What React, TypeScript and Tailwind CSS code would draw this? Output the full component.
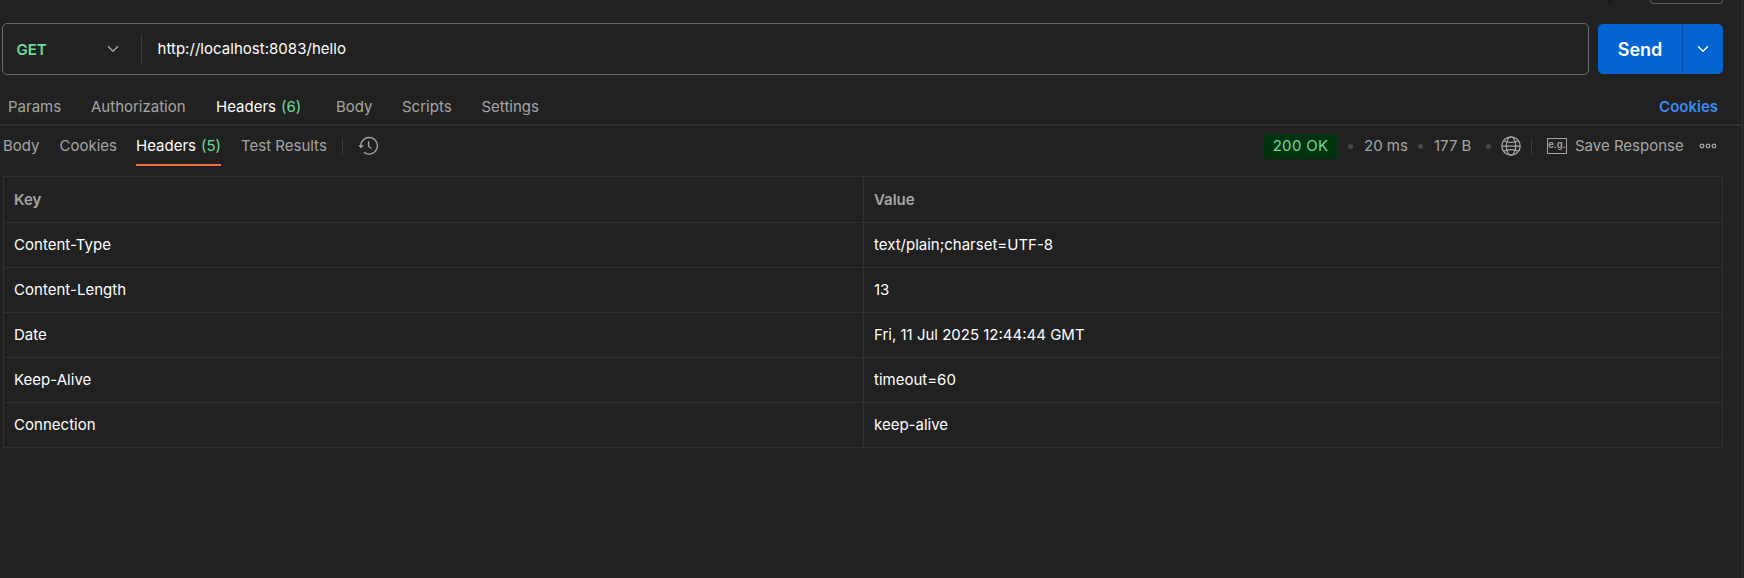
import type { ReactNode } from 'react';

const requestTabs = [
  { label: 'Params', width: 'w-[83px]' },
  { label: 'Authorization', width: 'w-[125px]' },
  { label: 'Headers', count: 6, width: 'w-[120px]' },
  { label: 'Body', width: 'w-[66px]' },
  { label: 'Scripts', width: 'w-[79.5px]' },
  { label: 'Settings', width: 'w-[80px]' },
];

const responseTabs = [
  { label: 'Body', width: 'w-[56.5px]' },
  { label: 'Cookies', width: 'w-[76.5px]' },
  { label: 'Headers', count: 5, width: 'w-[105px]' },
  { label: 'Test Results', width: 'w-[101px]' },
];

const headers = [
  ['Content-Type', 'text/plain;charset=UTF-8'],
  ['Content-Length', '13'],
  ['Date', 'Fri, 11 Jul 2025 12:44:44 GMT'],
  ['Keep-Alive', 'timeout=60'],
  ['Connection', 'keep-alive'],
];

function Chevron({ className }: { className: string }) {
  return (
    <svg width="12" height="8" viewBox="0 0 12 8" fill="none" stroke="currentColor" strokeWidth="1.4" className={className}>
      <path d="M1 1.2 6 6.2l5-5" />
    </svg>
  );
}

function HistoryIcon() {
  return (
    <svg width="20" height="20" viewBox="0 0 20 20" fill="none" stroke="currentColor" strokeWidth="1.3">
      <path d="M2.8 10.2a8.3 8.3 0 1 1 3.1 6.1" />
      <path d="M.7 9.6h4.6L3 12z" fill="currentColor" strokeWidth=".6" />
      <path d="M10.6 5.2v5.3l2.9 2" />
    </svg>
  );
}

function GlobeIcon() {
  return (
    <svg width="20" height="20" viewBox="0 0 20 20" fill="none" stroke="currentColor" strokeWidth="1.25">
      <circle cx="10" cy="10" r="9.2" />
      <ellipse cx="10" cy="10" rx="4.7" ry="9.2" />
      <path d="M2.7 4.8c3.6 2.2 11 2.2 14.6 0M2.7 15.2c3.6-2.2 11-2.2 14.6 0M.8 10h18.4" />
    </svg>
  );
}

function ExampleIcon() {
  return (
    <span className="flex h-4 w-5 items-center justify-center border border-[#a6a6a6] pb-[3px] text-[9.5px] leading-none font-semibold">
      e.g.
    </span>
  );
}

function MoreIcon() {
  return (
    <svg width="18" height="6" viewBox="0 0 18 6" fill="none" stroke="currentColor" strokeWidth="1.3">
      <circle cx="3" cy="3" r="1.8" />
      <circle cx="9" cy="3" r="1.8" />
      <circle cx="15" cy="3" r="1.8" />
    </svg>
  );
}

function Dot({ className }: { className: string }) {
  return <span className={`size-[5px] shrink-0 rounded-full bg-[#474747] ${className}`} />;
}

function TabText({ label, count }: { label: string; count?: number }) {
  return (
    <span className={count ? 'whitespace-nowrap text-white' : 'whitespace-nowrap'}>
      {label}
      {count && <span className="ml-[5px] text-[#6bdd9a]">({count})</span>}
    </span>
  );
}

function Cell({ children }: { children: ReactNode }) {
  return <div className="flex items-center border-r border-b border-[#303030] pl-[10px]">{children}</div>;
}

export default function App() {
  return (
    <div className="flex h-[578px] w-[1744px] overflow-hidden bg-[#212121] font-['Inter',sans-serif] text-[15px] leading-5 text-[#a6a6a6]">
      <div className="flex w-[1742px] shrink-0 flex-col">
        <div className="flex h-[23px] items-start justify-end pr-[19px]">
          <span className="mr-10 h-1 w-px bg-[#111111]" />
          <span className="h-1 w-[73px] rounded-b-[5px] border border-t-0 border-[#5c5c5c]" />
        </div>

        <div className="flex h-[52px] items-center pl-[2px]">
          <div className="flex h-[52px] w-[1587px] items-center rounded-[5px] border border-[#6b6b6b]">
            <div className="flex w-[138px] items-center justify-between pl-[13.5px]">
              <span className="pt-px font-semibold text-[#6bdd9a]">GET</span>
              <Chevron className="mr-[22px]" />
            </div>
            <span className="h-[30px] w-px bg-[#3b3b3b]" />
            <span className="ml-[15.5px] pb-px tracking-[0.03px] text-white">http://localhost:8083/hello</span>
          </div>
          <div className="ml-[9px] flex h-[50px] w-[125px] overflow-hidden rounded-[5px] bg-[#0265d2] text-white">
            <div className="flex w-[85px] items-center justify-center border-r border-[#0c4b94] pt-px text-[18px] font-semibold">Send</div>
            <div className="flex flex-1 items-center justify-center">
              <Chevron className="" />
            </div>
          </div>
        </div>

        <div className="flex h-[51px] items-center border-b-2 border-[#303030] pt-[14px] pr-6 pl-2">
          {requestTabs.map((tab) => (
            <div key={tab.label} className={`${tab.width} shrink-0`}>
              <TabText label={tab.label} count={tab.count} />
            </div>
          ))}
          <span className="ml-auto font-semibold text-[#3b8cf5]">Cookies</span>
        </div>

        <div className="flex h-[50px] pl-[3px]">
          {responseTabs.map((tab) => (
            <div key={tab.label} className={`${tab.width} shrink-0`}>
              <div
                className={
                  tab.count
                    ? 'flex h-[40px] w-[85px] items-center border-b-2 border-[#f26b3a] pt-[2px]'
                    : 'flex h-[40px] items-center'
                }
              >
                <TabText label={tab.label} count={tab.count} />
              </div>
            </div>
          ))}
          <div className="flex h-[40px] flex-1 items-center">
            <span className="h-[15px] w-px bg-[#3b3b3b]" />
            <span className="ml-[15px]">
              <HistoryIcon />
            </span>
            <span className="ml-auto flex h-[25px] w-[75px] items-center justify-center rounded-[5px] bg-[#01330f] tracking-[0.3px] text-[#6bdd9a]">
              200 OK
            </span>
            <Dot className="ml-[10px]" />
            <span className="ml-[11px] w-[44px] whitespace-nowrap">20 ms</span>
            <Dot className="ml-[10px]" />
            <span className="ml-[11px] w-[44px] whitespace-nowrap">177 B</span>
            <Dot className="ml-[8px]" />
            <span className="ml-[10px]">
              <GlobeIcon />
            </span>
            <span className="ml-[10px] h-[15px] w-px bg-[#3b3b3b]" />
            <span className="ml-[15px]">
              <ExampleIcon />
            </span>
            <span className="ml-2 w-[108px] whitespace-nowrap">Save Response</span>
            <span className="mr-[25px] ml-[16px]">
              <MoreIcon />
            </span>
          </div>
        </div>

        <div className="ml-[3px] grid w-[1720px] grid-cols-[860px_859px] grid-rows-[46px_repeat(5,45px)] border-t border-l border-[#303030]">
          <Cell>
            <span className="font-semibold">Key</span>
          </Cell>
          <Cell>
            <span className="font-semibold">Value</span>
          </Cell>
          {headers.flatMap(([name, value]) => [
            <Cell key={name}>
              <span className="tracking-[0.03px] text-white">{name}</span>
            </Cell>,
            <Cell key={name + value}>
              <span className="text-white">{value}</span>
            </Cell>,
          ])}
        </div>
      </div>
      <div className="w-px shrink-0 bg-[#303030]" />
    </div>
  );
}
